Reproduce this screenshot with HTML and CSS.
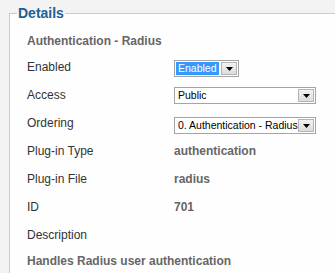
FILE: index.html
```html
<!DOCTYPE html>
<html>
<head>
<meta charset="utf-8">
<link rel="stylesheet" href="styles.css">
</head>
<body>
<fieldset class="details">
  <legend class="details-title">Details</legend>
  <div class="plugin-name">Authentication - Radius</div>
  <div class="form-grid">
    <div class="label">Enabled</div>
    <div class="value">
      <span class="select select-short">
        <span class="select-text selected">Enabled</span>
        <span class="select-btn"><svg width="7" height="4" viewBox="0 0 7 4"><path d="M0 0H7L3.5 4Z" fill="#000"/></svg></span>
      </span>
    </div>
    <div class="label">Access</div>
    <div class="value">
      <span class="select select-long">
        <span class="select-text">Public</span>
        <span class="select-btn"><svg width="7" height="4" viewBox="0 0 7 4"><path d="M0 0H7L3.5 4Z" fill="#000"/></svg></span>
      </span>
    </div>
    <div class="label">Ordering</div>
    <div class="value">
      <span class="select select-long select-low">
        <span class="select-text">0. Authentication - Radius</span>
        <span class="select-btn"><svg width="7" height="4" viewBox="0 0 7 4"><path d="M0 0H7L3.5 4Z" fill="#000"/></svg></span>
      </span>
    </div>
    <div class="label">Plug-in Type</div>
    <div class="value info">authentication</div>
    <div class="label">Plug-in File</div>
    <div class="value info">radius</div>
    <div class="label">ID</div>
    <div class="value info">701</div>
    <div class="label">Description</div>
    <div class="value"></div>
  </div>
  <div class="description">Handles Radius user authentication</div>
</fieldset>
</body>
</html>
```
FILE: styles.css
```css
html, body {
  margin: 0;
  padding: 0;
  overflow: hidden;
  background: #f3f3f3;
  font-family: "Liberation Sans", Arial, sans-serif;
  font-size: 12px;
}

.details {
  margin: 5px 0 0 9px;
  padding: 0 0 40px 7px;
  border: 1px solid #cccccc;
  background: #fefefe;
  width: 420px;
  min-width: 0;
}

.details-title {
  padding: 0 1px;
  font-size: 14px;
  line-height: 17px;
  font-weight: bold;
  color: #215e94;
}

.plugin-name {
  margin-top: 12px;
  padding-left: 10px;
  line-height: 14px;
  font-weight: bold;
  color: #666666;
}

.form-grid {
  display: grid;
  grid-template-columns: 147px 1fr;
  grid-auto-rows: 28px;
  margin-top: 5px;
  padding-left: 10px;
}

.label {
  line-height: 28px;
  color: #333333;
}

.value {
  display: flex;
  align-items: center;
  line-height: 28px;
}

.info {
  font-weight: bold;
  color: #666666;
}

.select {
  display: inline-flex;
  align-items: center;
  box-sizing: border-box;
  height: 17px;
  padding: 1px;
  border: 1px solid #a5a5a5;
  background: #ffffff;
  color: #000000;
  font-size: 10.5px;
  line-height: 13px;
}

.select-short {
  width: 65px;
  margin-top: 2px;
}

.select-long {
  width: 142px;
}

.select-low {
  margin-top: 4px;
}

.select-text {
  flex: 1;
  padding: 0 2px;
  height: 13px;
  white-space: nowrap;
  overflow: hidden;
}

.selected {
  background: #3399ff;
  color: #ffffff;
  margin-right: 2px;
}

.select-btn {
  display: flex;
  align-items: center;
  justify-content: center;
  box-sizing: border-box;
  width: 16px;
  height: 13px;
  padding-top: 2px;
  border: 1px solid #b4b4b4;
  background: linear-gradient(#f2f2f2, #dcdcdc);
}

.description {
  margin-top: 5px;
  padding-left: 10px;
  line-height: 14px;
  font-weight: bold;
  color: #666666;
}
```
